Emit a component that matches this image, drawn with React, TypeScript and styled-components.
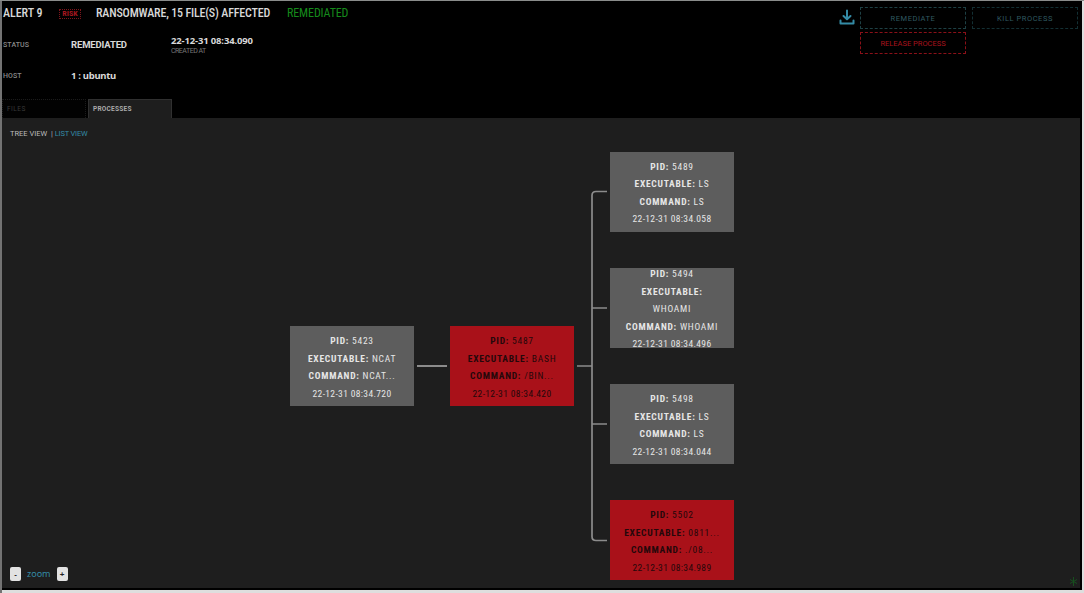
import React from 'react'
import styled, { createGlobalStyle } from 'styled-components'

const Colors = {
  text: '#d8d8d8',
  muted: '#8a8a8a',
  blue: '#348ba6',
  red: '#a91119',
  green: '#158a1b',
  node: '#5d5d5d',
  panel: '#1e1e1e',
  line: '#8c8c8c',
}

const GlobalStyle = createGlobalStyle`
  * {
    box-sizing: border-box;
  }

  body {
    margin: 0;
    background: #d8d8d8;
    font-family: Roboto, "Liberation Sans", sans-serif;
  }
`

const Window = styled.div`
  width: 1084px;
  height: 593px;
  padding: 1px 2px 3px 2px;
  background: linear-gradient(#8a8c8b 0 1px, transparent 1px), linear-gradient(90deg, #737373 0 2px, #dedede 2px);
  overflow: hidden;
`

const Screen = styled.div`
  height: 589px;
  display: flex;
  flex-direction: column;
  background: #000;
`

const Header = styled.header`
  flex: none;
  height: 98px;
  display: flex;
  justify-content: space-between;
`

const Label = styled.span<{ $size: number; $color?: string; $weight?: number; $spacing?: number; $font?: string }>`
  display: block;
  flex: none;
  white-space: pre;
  line-height: 1.2;
  font-size: ${p => p.$size}px;
  color: ${p => p.$color || Colors.text};
  font-weight: ${p => p.$weight || 400};
  letter-spacing: ${p => p.$spacing || 0}px;
  ${p => p.$font && `font-family: ${p.$font};`}
`

const Title = styled.div`
  display: grid;
  grid-template-columns: 56px 37px 191px auto;
  align-items: center;
  height: 25px;
  padding-left: 1px;
  font-stretch: 85%;
`

const Risk = styled.span`
  width: 22px;
  height: 10px;
  border: 1px dotted #7d151b;
  color: #a3161f;
  font-size: 8px;
  font-weight: 700;
  line-height: 8px;
  text-align: center;
`

const Details = styled.div`
  display: grid;
  grid-template-columns: 68px 100px auto;
  align-items: center;
  height: 24px;
  margin-top: 7px;
  padding-left: 1px;
`

const Actions = styled.div`
  display: flex;
  padding: 6px 4px 0 0;
`

const DownloadIcon = styled.svg`
  margin-top: 2px;
`

const Buttons = styled.div`
  display: grid;
  grid-template-columns: 106px 106px;
  grid-auto-rows: 22px;
  gap: 3px 6px;
  margin-left: 5px;
  height: 48px;
`

const Button = styled.button<{ $color: string; $border: string; $spacing?: number }>`
  padding: 0;
  border: 1px dashed ${p => p.$border};
  background: #000;
  color: ${p => p.$color};
  font: 400 7.5px Roboto, sans-serif;
  letter-spacing: ${p => p.$spacing ?? 0.55}px;
`

const Tabs = styled.div`
  flex: none;
  display: flex;
  gap: 2px;
  height: 19px;
`

const Tab = styled.div<{ $active?: boolean }>`
  width: 84px;
  padding: 6px 4px 0;
  border: 1px ${p => (p.$active ? 'solid #303030' : 'dotted #1b1b1b')};
  border-bottom: 0;
  background: ${p => (p.$active ? Colors.panel : '#020202')};
`

const Panel = styled.main`
  flex: 1;
  display: flex;
  flex-direction: column;
  margin: 0 2px 2px 0;
  background: ${Colors.panel};
`

const Views = styled.div`
  flex: none;
  display: flex;
  gap: 2px;
  height: 33px;
  padding: 11px 8px 0;
`

const Tree = styled.div`
  flex: none;
  display: flex;
  align-items: center;
  height: 430px;
  padding-left: 288px;
`

const Node = styled.div<{ $alert?: boolean }>`
  width: 124px;
  height: 80px;
  flex: none;
  display: flex;
  flex-direction: column;
  justify-content: center;
  padding-top: 2px;
  overflow: hidden;
  background: ${p => (p.$alert ? Colors.red : Colors.node)};
  color: ${p => (p.$alert ? '#24080b' : '#e6e6e6')};
  font-size: 9.5px;
  font-stretch: 85%;
  line-height: 17.5px;
  letter-spacing: 0.75px;
  text-align: center;
`

const Row = styled.div`
  flex: none;
  padding: 0 12px;
`

const Created = styled(Row)`
  letter-spacing: 0.35px;
`

const Branch = styled.div`
  display: flex;
  flex-direction: column;
  gap: 36.3px;
`

const Link = styled.div`
  width: 30px;
  height: 2px;
  margin: 0 3px;
  background: ${Colors.line};
`

const Footer = styled.footer`
  flex: none;
  display: flex;
  align-items: center;
  justify-content: space-between;
  height: 20px;
  margin-top: -17px;
  padding: 0 2px 0 8px;
`

const Zoom = styled.div`
  display: flex;
  align-items: center;
  gap: 6px;
`

const ZoomButton = styled.button`
  width: 11px;
  height: 14px;
  padding: 0;
  border: 0;
  border-radius: 2px;
  background: #e2e2e2;
  color: #222;
  font: 700 8px "Liberation Sans", sans-serif;
`

const Resize = styled.svg`
  margin-top: 15px;
`

type Process = { pid: string; executable: string; command: string; date: string; alert?: boolean }

const children: Process[] = [
  { pid: '5489', executable: 'LS', command: 'LS', date: '22-12-31 08:34.058' },
  { pid: '5494', executable: 'WHOAMI', command: 'WHOAMI', date: '22-12-31 08:34.496' },
  { pid: '5498', executable: 'LS', command: 'LS', date: '22-12-31 08:34.044' },
  { pid: '5502', executable: '0811...', command: './08...', date: '22-12-31 08:34.989', alert: true },
]

const ProcessNode: React.FC<Process> = ({ pid, executable, command, date, alert }) => (
  <Node $alert={alert}>
    <Row><b>PID:</b> {pid}</Row>
    <Row><b>EXECUTABLE:</b> {executable}</Row>
    <Row><b>COMMAND:</b> {command}</Row>
    <Created>{date}</Created>
  </Node>
)

const App: React.FC = () => (
  <Window>
    <GlobalStyle />
    <Screen>
      <Header>
        <div>
          <Title>
            <Label $size={12} $weight={500} $spacing={-0.05}>ALERT 9</Label>
            <Risk>RISK</Risk>
            <Label $size={12} $weight={500} $spacing={-0.18}>RANSOMWARE, 15 FILE(S) AFFECTED</Label>
            <Label $size={12} $color={Colors.green} $spacing={-0.12}>REMEDIATED</Label>
          </Title>
          <Details>
            <Label $size={7} $color={Colors.muted} $weight={500} $spacing={0.1}>STATUS</Label>
            <Label $size={9.5} $weight={700} $spacing={-0.15}>REMEDIATED</Label>
            <div>
              <Label $size={9.5} $weight={700} $spacing={-0.15} $font={'"Noto Sans"'}>22-12-31 08:34.090</Label>
              <Label $size={7} $color="#777" $spacing={-0.5}>CREATED AT</Label>
            </div>
          </Details>
          <Details>
            <Label $size={7} $color={Colors.muted} $weight={500} $spacing={0.1}>HOST</Label>
            <Label $size={9.5} $weight={700} $spacing={-0.3} $font={'"Noto Sans"'}>1 : ubuntu</Label>
          </Details>
        </div>
        <Actions>
          <DownloadIcon width="16" height="16" viewBox="0 0 16 16" fill="none" stroke={Colors.blue} strokeWidth="2" strokeLinecap="round" strokeLinejoin="round">
            <path d="M8 1.5v8.5M4.5 7L8 10.3 11.5 7M1.5 11.5v3h13v-3" />
          </DownloadIcon>
          <Buttons>
            <Button $color="#305a60" $border="#1e4044">REMEDIATE</Button>
            <Button $color="#305a60" $border="#132f33">KILL PROCESS</Button>
            <Button $color="#a9131d" $border="#8b1018" $spacing={0}>RELEASE PROCESS</Button>
          </Buttons>
        </Actions>
      </Header>
      <Tabs>
        <Tab><Label $size={6.5} $color="#393939" $spacing={0.5}>FILES</Label></Tab>
        <Tab $active><Label $size={6.5} $weight={700} $color="#aaa" $spacing={0.25}>PROCESSES</Label></Tab>
      </Tabs>
      <Panel>
        <Views>
          <Label $size={7.5} $color="#bbb">TREE VIEW  |</Label>
          <Label $size={7.5} $color={Colors.blue} $spacing={-0.2}>LIST VIEW</Label>
        </Views>
        <Tree>
          <ProcessNode pid="5423" executable="NCAT" command="NCAT..." date="22-12-31 08:34.720" />
          <Link />
          <ProcessNode pid="5487" executable="BASH" command="/BIN..." date="22-12-31 08:34.420" alert />
          <svg width="36" height="430" viewBox="0 0 36 430" fill="none" stroke={Colors.line} strokeWidth="1.7">
            <path d="M3 215h15M33 40.5h-11q-4 0-4 4v341q0 4 4 4h11M18 157h15M18 273h15" />
          </svg>
          <Branch>
            {children.map(child => <ProcessNode key={child.pid} {...child} />)}
          </Branch>
        </Tree>
        <Footer>
          <Zoom>
            <ZoomButton>-</ZoomButton>
            <Label $size={9} $color={Colors.blue} $font={'"Noto Sans"'}>zoom</Label>
            <ZoomButton>+</ZoomButton>
          </Zoom>
          <Resize width="9" height="9" viewBox="0 0 9 9" stroke="#174f1e">
            <path d="M4.5 0v9M1 2.5l7 4M8 2.5l-7 4" />
          </Resize>
        </Footer>
      </Panel>
    </Screen>
  </Window>
)

export default App
